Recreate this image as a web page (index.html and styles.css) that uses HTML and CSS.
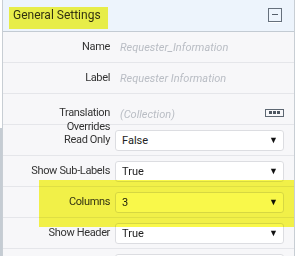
FILE: index.html
```html
<!DOCTYPE html>
<html lang="en">
<head>
    <meta charset="UTF-8">
    <title>General Settings</title>
    <link rel="stylesheet" href="styles.css">
</head>
<body>
    <div class="strip"></div>
    <div class="panel">
        <div class="panel-head">
            <span class="titulo">General Settings</span>
            <span class="colapsar"></span>
            <div class="marca marca-titulo"></div>
        </div>
        <div class="fila">
            <label>Name</label>
            <div class="vacio">Requester_Information</div>
        </div>
        <div class="fila">
            <label>Label</label>
            <div class="vacio">Requester Information</div>
        </div>
        <div class="fila">
            <label class="doble">Translation<br>Overrides</label>
            <div class="vacio coleccion">(Collection)<span class="puntos"><i></i><i></i><i></i></span></div>
        </div>
        <div class="fila">
            <label>Read Only</label>
            <div class="combo">False<span class="flecha">&#9660;</span></div>
        </div>
        <div class="fila">
            <label>Show Sub-Labels</label>
            <div class="combo">True<span class="flecha">&#9660;</span></div>
        </div>
        <div class="fila">
            <label>Columns</label>
            <div class="combo">3<span class="flecha">&#9660;</span></div>
        </div>
        <div class="fila">
            <label>Show Header</label>
            <div class="combo">True<span class="flecha">&#9660;</span></div>
        </div>
        <div class="fila">
            <label></label>
            <div class="combo"></div>
        </div>
        <div class="marca marca-columnas"></div>
    </div>
</body>
</html>
```

FILE: styles.css
```css
*{
    margin: 0px;
    padding: 0px;
    box-sizing: border-box;
}
body{
    font-family: Roboto, "Liberation Sans", sans-serif;
    font-size: 11px;
    color: #333;
    background: #fff;
    width: 297px;
    height: 256px;
    overflow: hidden;
    position: relative;
}
.strip{
    position: absolute;
    left: 0px;
    top: 128px;
    width: 2px;
    height: 128px;
    background: #c5ccd3;
}
.panel{
    position: relative;
    margin-left: 2px;
    width: 293px;
    height: 256px;
    overflow: hidden;
    border-left: 1px solid #c8ced4;
    border-right: 1px solid #c8ced4;
    background: #f7f7f9;
}
.panel-head{
    position: relative;
    height: 32px;
    background: #edf4fc;
    border-bottom: 1px solid #c3cbd3;
    display: flex;
    align-items: center;
    justify-content: space-between;
    padding: 0px 12px 0px 10px;
}
.titulo{
    font-size: 12px;
    color: #333;
    padding-bottom: 1px;
}
.colapsar{
    position: relative;
    width: 14px;
    height: 14px;
    border: 1px solid #66707c;
    margin-top: -1px;
    box-shadow: 0px 2px 0px -1px #fff;
}
.colapsar::after{
    content: "";
    position: absolute;
    left: 3px;
    top: 5px;
    width: 6px;
    height: 1px;
    background: #555f6a;
}
.marca{
    position: absolute;
    background: #f9f84a;
    mix-blend-mode: multiply;
}
.marca-titulo{
    left: 6px;
    top: 7px;
    width: 99px;
    height: 22px;
}
.marca-columnas{
    left: 36px;
    top: 180px;
    width: 262px;
    height: 47px;
}
.fila{
    display: grid;
    grid-template-columns: 112px 1fr;
    align-items: center;
    height: 31px;
    border-bottom: 1px solid #e5e6ea;
    padding-right: 10px;
}
.fila label{
    text-align: right;
    padding-right: 5px;
    line-height: 14px;
    white-space: nowrap;
    letter-spacing: -0.35px;
}
.fila .doble{
    margin-top: 12px;
}
.vacio{
    color: #b9bdc4;
    font-style: italic;
    padding-left: 5px;
}
.coleccion{
    display: flex;
    justify-content: space-between;
    align-items: center;
}
.puntos{
    display: flex;
    justify-content: space-around;
    align-items: center;
    width: 19px;
    height: 8px;
    border: 1px solid #5d6772;
    padding: 0px 2px;
    margin-top: -3px;
}
.puntos i{
    width: 3px;
    height: 3px;
    background: #4d5660;
}
.combo{
    position: relative;
    height: 21px;
    background: #fff;
    border: 1px solid #dcdde1;
    border-radius: 3px;
    padding-left: 6px;
    line-height: 19px;
    color: #222;
}
.flecha{
    position: absolute;
    right: 5px;
    top: 0px;
    font-size: 9px;
    color: #111;
}
```
